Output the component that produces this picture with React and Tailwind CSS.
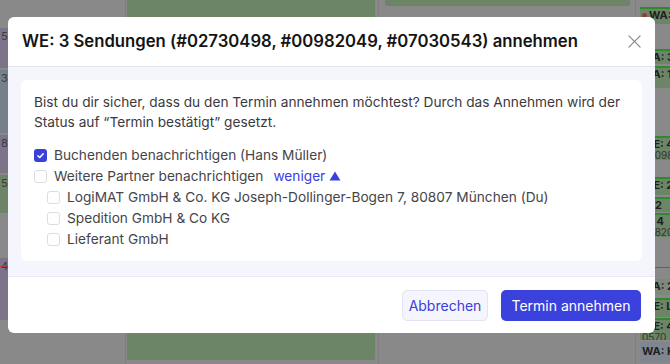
import React from 'react'

const font = { fontFamily: 'Inter, "Open Sans", "Liberation Sans", sans-serif' }

// right column event cards, only their left edge peeks out behind the modal
const rightCards = [
  { top: 7, h: 17, label: 'WA: 23', dot: true },
  { top: 49, h: 15, label: 'WA: 31' },
  { top: 66, h: 22, label: 'WA: 12' },
  { top: 136, h: 24, label: 'WE: 4', sub: '#00982049' },
  { top: 177, h: 18, label: 'WE: 2' },
  { top: 197, h: 15, label: 'E: 2' },
  { top: 213, h: 24, label: 'A: 4', sub: '#08207' },
]

const leftCards = [
  { top: 28, h: 40, cls: 'bg-[#7e7489]', txt: '52' },
  { top: 70, h: 63, cls: 'bg-[#76808a]', txt: '30' },
  { top: 135, h: 38, cls: 'bg-[#7e7489]', txt: '87' },
  { top: 175, h: 38, cls: 'bg-[#6e8468]', txt: '52' },
  { top: 258, h: 62, cls: 'bg-[#7e7489]', txt: '44' },
]

function Checkbox({ checked }) {
  if (checked) {
    return (
      <span className="flex h-[13px] w-[13px] shrink-0 items-center justify-center rounded-[3px] bg-[#3a40dc]">
        <svg width="9" height="9" viewBox="0 0 12 12" fill="none">
          <path d="M2.5 6.3 5 8.6 9.6 3.6" stroke="white" strokeWidth="2" strokeLinecap="round" strokeLinejoin="round" />
        </svg>
      </span>
    )
  }
  return <span className="h-[13px] w-[13px] shrink-0 rounded-[3px] border border-[#dcdde3] bg-white" />
}

function Row({ checked, children, nested }) {
  return (
    <div className={`flex h-[21px] items-center gap-[7px] ${nested ? 'pl-[13px]' : ''}`}>
      <Checkbox checked={checked} />
      <span className="whitespace-nowrap text-[13.7px] text-[#454549]">{children}</span>
    </div>
  )
}

function Calendar() {
  return (
    <div className="flex h-[364px] w-[670px] bg-[#898989]">
      <div className="relative h-full w-[126px] border-r border-[#7f7f7f]">
        {leftCards.map((c, i) => (
          <div key={i} className={`absolute left-0 w-[20px] overflow-hidden ${c.cls}`} style={{ top: c.top, height: c.h }}>
            <div className="pl-[1px] pt-[1px] text-[11px] leading-[14px] text-[#3a3a3a]">{c.txt}</div>
          </div>
        ))}
        <div className="absolute left-0 top-[266px] h-px w-[20px] bg-[#b04040]" />
      </div>
      <div className="h-full w-[252px] pl-[1px] pr-[3px] pb-[4px]">
        <div className="h-full rounded-b-[2px] bg-[#6b8566]" />
      </div>
      <div className="h-full w-[258px] border-x border-[#7f7f7f] pl-[6px] pr-[5px]">
        <div className="h-[6px] rounded-b-[2px] bg-[#6b8566]" />
      </div>
      <div className="relative h-full flex-1 whitespace-nowrap">
        {rightCards.map((c, i) => (
          <div key={i} className="absolute left-[4px] right-0 overflow-hidden border-t-2 border-[#2f8a2f] bg-[#6b8566] pl-[2px]" style={{ top: c.top, height: c.h }}>
            <div className="flex items-center gap-[2px] text-[11px] font-bold leading-[12px] text-[#1f1f1f]">
              {c.dot && <span className="h-[5px] w-[5px] shrink-0 rounded-full bg-[#a0304a]" />}
              <span className="shrink-0">{c.label}</span>
            </div>
            {c.sub && <div className="text-[10px] leading-[10px] text-[#333]">{c.sub}</div>}
          </div>
        ))}
        <div className="absolute left-[4px] right-0 top-[267px] h-px bg-[#b04040]" />
        <div className="absolute left-[4px] right-0 top-[279px] h-[16px] overflow-hidden bg-[#7f887c] pl-[2px] text-[11px] font-bold leading-[14px] text-[#1f1f1f]">WA: 2</div>
        <div className="absolute left-[4px] right-0 top-[298px] h-[19px] overflow-hidden border-t-2 border-[#2f8a2f] bg-[#6b8566] pl-[2px] text-[11px] font-bold leading-[13px] text-[#1f1f1f]">WE: Li</div>
        <div className="absolute left-[4px] right-0 top-[318px] h-[22px] overflow-hidden border-t-2 border-[#2f8a2f] bg-[#6b8566] pl-[2px] text-[11px] font-bold leading-[12px] text-[#1f1f1f]">WE: 4<div className="text-[10px] font-normal leading-[10px] text-[#333]">0570</div></div>
        <div className="absolute left-[4px] right-0 top-[342px] h-[20px] overflow-hidden bg-[#7f8690] pl-[2px] pt-[2px] text-[11px] font-bold leading-[14px] text-[#1f1f1f]">WA: K</div>
      </div>
    </div>
  )
}

export default function App() {
  return (
    <div className="relative h-[364px] w-[670px] overflow-hidden" style={font}>
      <Calendar />
      <div className="absolute inset-0 pl-[8px] pt-[17px]">
        <div className="flex h-[316px] w-[647px] flex-col overflow-hidden rounded-[6px] bg-white">
          <div className="flex h-[50px] shrink-0 items-center justify-between border-b border-[#e4e6ef] pl-[14px] pr-[14px]">
            <h2 className="whitespace-nowrap text-[16.7px] font-semibold text-[#141414]">
              WE: 3 Sendungen (#02730498, #00982049, #07030543) annehmen
            </h2>
            <svg width="15" height="15" viewBox="0 0 16 16" fill="none" className="mr-[-1px]">
              <path d="M2 2 14 14M14 2 2 14" stroke="#8a8a8a" strokeWidth="1.3" strokeLinecap="round" />
            </svg>
          </div>
          <div className="flex-1 border-b border-[#e8e9f4] bg-[#f4f5fd] px-[13px] pb-[14px] pt-[13px]">
            <div className="rounded-[6px] bg-white px-[13px] pb-[11px] pt-[12px]">
              <p className="text-[13.7px] leading-[20px] text-[#3a3a3e]">
                Bist du dir sicher, dass du den Termin annehmen möchtest? Durch das Annehmen wird der Status auf “Termin bestätigt” gesetzt.
              </p>
              <div className="mt-[13px] flex flex-col">
                <Row checked>Buchenden benachrichtigen (Hans Müller)</Row>
                <div className="flex h-[21px] items-center gap-[7px]">
                  <Checkbox />
                  <span className="text-[13.7px] text-[#454549]">Weitere Partner benachrichtigen</span>
                  <button className="ml-[3px] flex items-center gap-[4px] text-[13.7px] text-[#3a40e0]">
                    weniger
                    <svg width="12" height="10" viewBox="0 0 12 10"><path d="M6 0.5 11.5 9.5H0.5Z" fill="#3a40e0" /></svg>
                  </button>
                </div>
                <Row nested>LogiMAT GmbH &amp; Co. KG Joseph-Dollinger-Bogen 7, 80807 München (Du)</Row>
                <Row nested>Spedition GmbH &amp; Co KG</Row>
                <Row nested>Lieferant GmbH</Row>
              </div>
            </div>
          </div>
          <div className="flex h-[56px] shrink-0 items-center justify-end gap-[13px] pr-[14px]">
            <button className="h-[31px] w-[86px] rounded-[5px] border border-[#e1e3f6] bg-[#f4f5fd] text-[14px] text-[#3a40d8]">
              Abbrechen
            </button>
            <button className="h-[31px] w-[140px] rounded-[5px] bg-[#3a41dc] text-[14px] text-white">
              Termin annehmen
            </button>
          </div>
        </div>
      </div>
    </div>
  )
}
